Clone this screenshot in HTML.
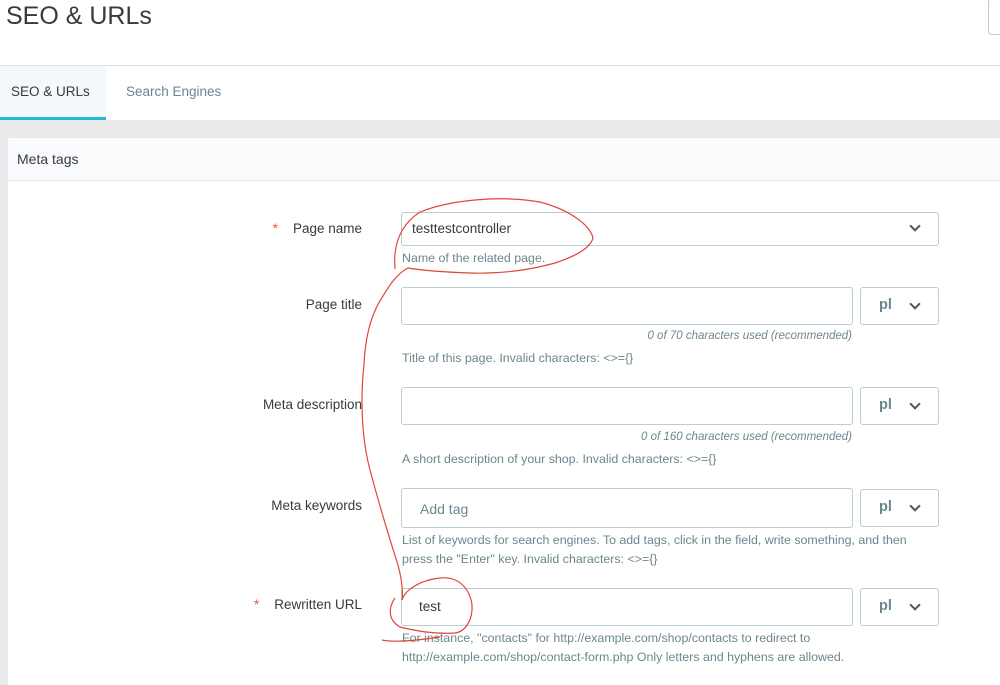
<!DOCTYPE html>
<html><head><meta charset="utf-8"><style>
*{margin:0;padding:0;box-sizing:border-box}
html{overflow:hidden;width:1000px;height:685px}
body{width:1000px;height:685px;overflow:hidden;background:#eaebec;font-family:"Liberation Sans",sans-serif;color:#363a41;position:relative}
.a{position:absolute}
.hdr{left:0;top:0;width:1000px;height:66px;background:#fff;border-bottom:1px solid #dfe3e6}
.tabs{left:0;top:66px;width:1000px;height:54px;background:#fff}
.lbl{font-size:13.5px;text-align:right;width:200px;left:162px;color:#363a41}
.help{font-size:12.4px;color:#6c868e;left:402px;line-height:19px}
.inp{background:#fff;border:1px solid #bbcdd2;border-radius:3px}
.pl{left:860px;width:79px;height:38px;font-size:14.5px;font-weight:bold;color:#6c868e;padding:9px 0 0 18px}
.chev{position:absolute;right:19px;top:12px;width:8px;height:8px;border-right:2px solid #555;border-bottom:2px solid #555;transform:rotate(45deg)}
.cnt{font-size:11.5px;font-style:italic;color:#6c868e;right:148px;text-align:right}
.star{color:#f54c3e}
</style></head><body>
<div class="a hdr"></div>
<div class="a" style="left:6px;top:2px;font-size:25px;color:#363a41">SEO &amp; URLs</div>
<div class="a" style="left:988px;top:-2px;width:20px;height:37px;border:1px solid #bbcdd2;border-radius:4px;background:#fff"></div>
<div class="a tabs"></div>
<div class="a" style="left:0;top:66px;width:106px;height:54px;background:#f4f8fa;border-bottom:3px solid #25b9d7"></div>
<div class="a" style="left:11px;top:84px;font-size:13.5px;color:#363a41">SEO &amp; URLs</div>
<div class="a" style="left:126px;top:84px;font-size:13.5px;color:#6c868e">Search Engines</div>
<div class="a" style="left:7px;top:137px;width:993px;height:548px;background:#fff;border-left:1px solid #e4e8ea;border-top:1px solid #e4e8ea;border-radius:4px 0 0 0"></div>
<div class="a" style="left:8px;top:138px;width:992px;height:43px;background:#fafbfc;border-bottom:1px solid #e1e6e8"></div>
<div class="a" style="left:17px;top:151px;font-size:14px;color:#363a41">Meta tags</div>

<div class="a lbl" style="top:221px"><span class="star">*</span>&nbsp;&nbsp;&nbsp;&nbsp;Page name</div>
<div class="a inp" style="left:401px;top:212px;width:538px;height:34px"><span class="a" style="left:10px;top:8px;font-size:13.5px">testtestcontroller</span><div class="chev" style="top:9px"></div></div>
<div class="a help" style="top:249px">Name of the related page.</div>

<div class="a lbl" style="top:297px">Page title</div>
<div class="a inp" style="left:401px;top:287px;width:452px;height:38px"></div>
<div class="a inp pl" style="top:287px">pl<div class="chev"></div></div>
<div class="a cnt" style="top:330px">0 of 70 characters used (recommended)</div>
<div class="a help" style="top:349px">Title of this page. Invalid characters: &lt;&gt;={}</div>

<div class="a lbl" style="top:397px">Meta description</div>
<div class="a inp" style="left:401px;top:387px;width:452px;height:38px"></div>
<div class="a inp pl" style="top:387px">pl<div class="chev"></div></div>
<div class="a cnt" style="top:431px">0 of 160 characters used (recommended)</div>
<div class="a help" style="top:450px">A short description of your shop. Invalid characters: &lt;&gt;={}</div>

<div class="a lbl" style="top:498px">Meta keywords</div>
<div class="a inp" style="left:401px;top:488px;width:452px;height:40px"><span class="a" style="left:18px;top:12px;font-size:14px;color:#6c868e">Add tag</span></div>
<div class="a inp pl" style="top:489px">pl<div class="chev"></div></div>
<div class="a help" style="top:531px">List of keywords for search engines. To add tags, click in the field, write something, and then<br>press the "Enter" key. Invalid characters: &lt;&gt;={}</div>

<div class="a lbl" style="top:597px"><span class="star">*</span>&nbsp;&nbsp;&nbsp;&nbsp;Rewritten URL</div>
<div class="a inp" style="left:401px;top:588px;width:452px;height:38px"><span class="a" style="left:17px;top:10px;font-size:13.5px">test</span></div>
<div class="a inp pl" style="top:588px">pl<div class="chev"></div></div>
<div class="a help" style="top:629px">For instance, "contacts" for http://example.com/shop/contacts to redirect to<br>http://example.com/shop/contact-form.php Only letters and hyphens are allowed.</div>

<svg class="a" style="left:0;top:0" width="1000" height="685" fill="none" stroke="#e0463c" stroke-width="1.2">
<path d="M395,269 C393,245 400,225 420,212 C450,200 500,195 540,202 C570,210 590,225 593,238 C590,250 570,258 555,263 C530,270 500,274 470,273 C440,272 420,270 408,268 C395,275 388,288 383,296 C370,315 365,340 364,365 C360,400 362,440 370,470 C378,500 390,540 398,565 C402,580 403,592 402,600"/>
<path d="M402,600 C405,590 420,580 440,578 C460,576 470,590 472,605 C473,620 465,632 455,633 C440,634 420,632 400,627 C388,620 388,608 395,598"/>
<path d="M382,640 C395,643 420,640 440,637"/>
</svg>
</body></html>
